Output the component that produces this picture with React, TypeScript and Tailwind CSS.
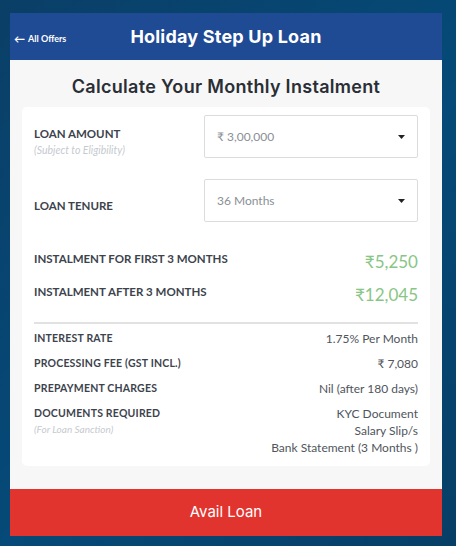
import React from "react";

const details = [
  { label: "INTEREST RATE", value: ["1.75% Per Month"] },
  { label: "PROCESSING FEE (GST INCL.)", value: ["₹ 7,080"] },
  { label: "PREPAYMENT CHARGES", value: ["Nil (after 180 days)"] },
  {
    label: "DOCUMENTS REQUIRED",
    note: "(For Loan Sanction)",
    value: ["KYC Document", "Salary Slip/s", "Bank Statement (3 Months )"],
  },
];

function Caret() {
  return (
    <svg width="7" height="4" viewBox="0 0 7 4" className="shrink-0">
      <path d="M0 0h7L3.5 4z" fill="#222" />
    </svg>
  );
}

function SelectBox({ value }: { value: string }) {
  return (
    <div className="flex h-[43px] w-[214px] items-center justify-between rounded-[2px] border border-[#dcdcdc] bg-white pl-[12px] pr-[12px]">
      <span className="text-[12px] text-[#8a8f96]">{value}</span>
      <Caret />
    </div>
  );
}

export default function App() {
  return (
    <div
      className="h-[546px] w-[456px] overflow-hidden bg-[#06446f] px-[10px] pt-[13px] font-['Lato',sans-serif]"
      style={{ backgroundImage: "linear-gradient(135deg, #0a3f67 0%, #054a78 55%, #073e66 100%)" }}
    >
      <div className="w-[432px]">
        {/* Header */}
        <div className="relative flex h-[47px] items-center justify-center bg-[#1f4a94]">
          <span className="absolute left-[4px] top-[19px] flex items-center gap-[3px] text-[9px] font-bold text-white">
            <span className="text-[11px] leading-none">←</span> All Offers
          </span>
          <h1 className="font-['Inter',sans-serif] text-[18px] font-bold tracking-[0.2px] text-white">
            Holiday Step Up Loan
          </h1>
        </div>

        {/* Body */}
        <div className="bg-[#f7f7f7] px-[12px] pb-[23px]">
          <h2 className="pb-[9px] pt-[16px] text-center font-['Inter',sans-serif] text-[18px] font-semibold leading-[22px] tracking-[0.3px] text-[#2a2e35]">
            Calculate Your Monthly Instalment
          </h2>

          <div className="rounded-[5px] bg-white px-[12px] pb-[10px] pt-[8px]">
            <div className="flex items-start">
              <div className="w-[170px] pt-[12px]">
                <div className="text-[11.5px] font-bold leading-[14px] text-[#3d434d]">LOAN AMOUNT</div>
                <div className="mt-[3px] text-[10.5px] italic leading-[12px] text-[#c6cad0]">(Subject to Eligibility)</div>
              </div>
              <SelectBox value="₹ 3,00,000" />
            </div>

            <div className="mt-[21px] flex items-start">
              <div className="w-[170px] pt-[20px] text-[11.5px] font-bold leading-[14px] text-[#3d434d]">
                LOAN TENURE
              </div>
              <SelectBox value="36 Months" />
            </div>

            <div className="mt-[26px] flex items-start justify-between">
              <span className="pt-[2px] text-[11.5px] font-bold text-[#3d434d]">INSTALMENT FOR FIRST 3 MONTHS</span>
              <span className="pt-[3px] text-[17px] leading-[22px] text-[#88c685]">₹5,250</span>
            </div>
            <div className="mt-[8px] flex items-start justify-between">
              <span className="pt-[2px] text-[11.5px] font-bold text-[#3d434d]">INSTALMENT AFTER 3 MONTHS</span>
              <span className="pt-[3px] text-[17px] leading-[22px] text-[#88c685]">₹12,045</span>
            </div>

            <div className="mt-[16px] h-[2px] bg-[#e2e2e2]" />

            <div className="mt-[6px] flex flex-col gap-[8px]">
              {details.map((d) => (
                <div key={d.label} className="flex items-start justify-between">
                  <div>
                    <div className="text-[10.5px] font-bold leading-[17px] tracking-[0.2px] text-[#3d434d]">{d.label}</div>
                    {d.note && (
                      <div className="mt-[1px] text-[10px] italic leading-[12px] text-[#c6cad0]">{d.note}</div>
                    )}
                  </div>
                  <div className="text-right text-[12px] leading-[17px] text-[#50555c]">
                    {d.value.map((v) => (
                      <div key={v}>{v}</div>
                    ))}
                  </div>
                </div>
              ))}
            </div>
          </div>
        </div>

        <button className="flex h-[47px] w-full items-center justify-center bg-[#e1342e] font-['Inter',sans-serif] text-[15px] text-white">
          Avail Loan
        </button>
      </div>
    </div>
  );
}
